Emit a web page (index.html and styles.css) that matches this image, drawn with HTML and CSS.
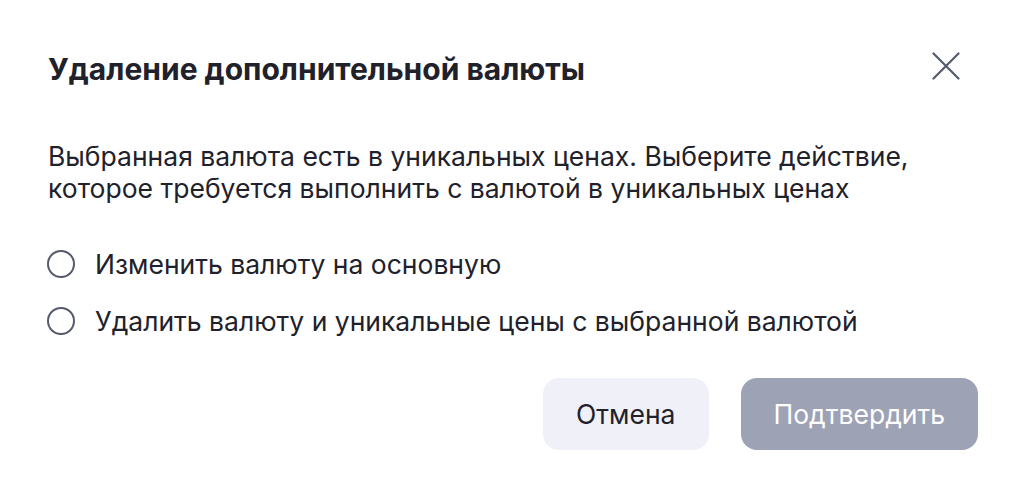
FILE: index.html
```html
<!DOCTYPE html>
<html lang="ru">
<head>
<meta charset="utf-8">
<link rel="stylesheet" href="styles.css">
</head>
<body>
<div class="dialog">
  <div class="header">
    <h1 class="title">Удаление дополнительной валюты</h1>
    <button class="close" aria-label="Закрыть">
      <svg width="28" height="28" viewBox="0 0 28 28"><path d="M1.5 1.5L26.5 26.5M26.5 1.5L1.5 26.5" stroke="#555a6e" stroke-width="2.2" stroke-linecap="round" fill="none"/></svg>
    </button>
  </div>
  <p class="text">Выбранная валюта есть в уникальных ценах. Выберите действие,<br>которое требуется выполнить с валютой в уникальных ценах</p>
  <div class="options">
    <label class="option"><span class="radio"></span><span>Изменить валюту на основную</span></label>
    <label class="option"><span class="radio"></span><span>Удалить валюту и уникальные цены с выбранной валютой</span></label>
  </div>
  <div class="actions">
    <button class="btn btn-secondary">Отмена</button>
    <button class="btn btn-primary">Подтвердить</button>
  </div>
</div>
</body>
</html>
```
FILE: styles.css
```css
html, body {
  margin: 0;
  padding: 0;
  background: #ffffff;
}
body {
  font-family: Inter, "Open Sans", sans-serif;
  color: #21212b;
}
.dialog {
  width: 1024px;
  box-sizing: border-box;
  padding: 48px 46px 40px 48px;
}
.header {
  display: flex;
  justify-content: space-between;
  align-items: flex-start;
  height: 44px;
}
.title {
  margin: 0;
  font-size: 30px;
  font-weight: 700;
  line-height: 42px;
}
.close {
  background: none;
  border: 0;
  padding: 0;
  margin: 4px 18px 0 0;
  width: 28px;
  height: 28px;
  display: flex;
}
.text {
  margin: 48px 0 0 0;
  font-size: 26.5px;
  line-height: 32px;
}
.options {
  display: flex;
  flex-direction: column;
  gap: 25px;
  margin-top: 44px;
}
.option {
  display: flex;
  align-items: center;
  gap: 20px;
  font-size: 26.5px;
  line-height: 32px;
}
.radio {
  width: 24px;
  height: 24px;
  border: 2px solid #555a6e;
  border-radius: 50%;
  flex: none;
  margin-left: -1px;
}
.actions {
  display: flex;
  justify-content: flex-end;
  gap: 32px;
  margin-top: 41px;
}
.btn {
  height: 72px;
  border: 0;
  border-radius: 16px;
  font-family: inherit;
  font-size: 26.5px;
  padding: 0 33px;
}
.btn-secondary {
  background: #f0f0f8;
  color: #21212b;
}
.btn-primary {
  background: #9ea2b5;
  color: #ffffff;
}
```
